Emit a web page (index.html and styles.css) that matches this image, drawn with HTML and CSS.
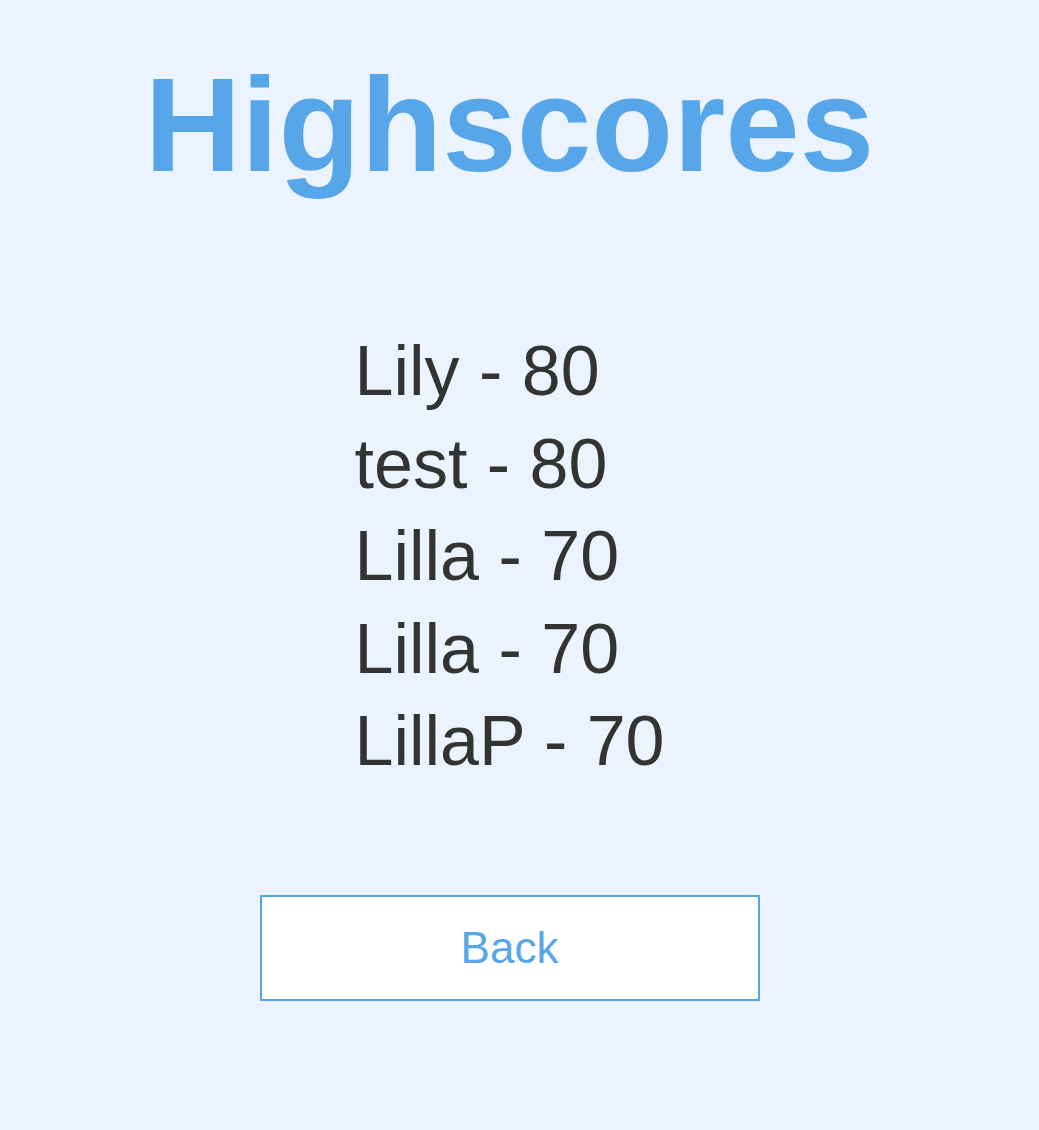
FILE: index.html
```html
<!DOCTYPE html>
<html>
<head>
<meta charset="utf-8">
<link rel="stylesheet" href="styles.css">
</head>
<body>
<main class="page">
  <h1 class="title">Highscores</h1>
  <ul class="scores">
    <li>Lily - 80</li>
    <li>test - 80</li>
    <li>Lilla - 70</li>
    <li>Lilla - 70</li>
    <li>LillaP - 70</li>
  </ul>
  <button class="back">Back</button>
</main>
</body>
</html>
```
FILE: styles.css
```css
html, body {
  margin: 0;
  padding: 0;
  background: #ebf3fe;
  height: 100%;
}
.page {
  display: flex;
  flex-direction: column;
  align-items: center;
  padding-right: 20px;
  font-family: "Liberation Sans", Arial, sans-serif;
}
.title {
  margin: 45px 0 0;
  font-size: 134px;
  line-height: 160px;
  font-weight: bold;
  color: #58a6ea;
}
.scores {
  list-style: none;
  margin: 120px 0 0;
  padding: 0;
  width: 310px;
  white-space: nowrap;
  font-size: 70px;
  line-height: 92.5px;
  color: #333333;
}
.back {
  margin-top: 107px;
  width: 500px;
  height: 106px;
  background: #ffffff;
  border: 2px solid #58a6ea;
  color: #58a6ea;
  font-family: "Liberation Sans", Arial, sans-serif;
  font-size: 44px;
  padding: 0;
  box-sizing: border-box;
}
```
